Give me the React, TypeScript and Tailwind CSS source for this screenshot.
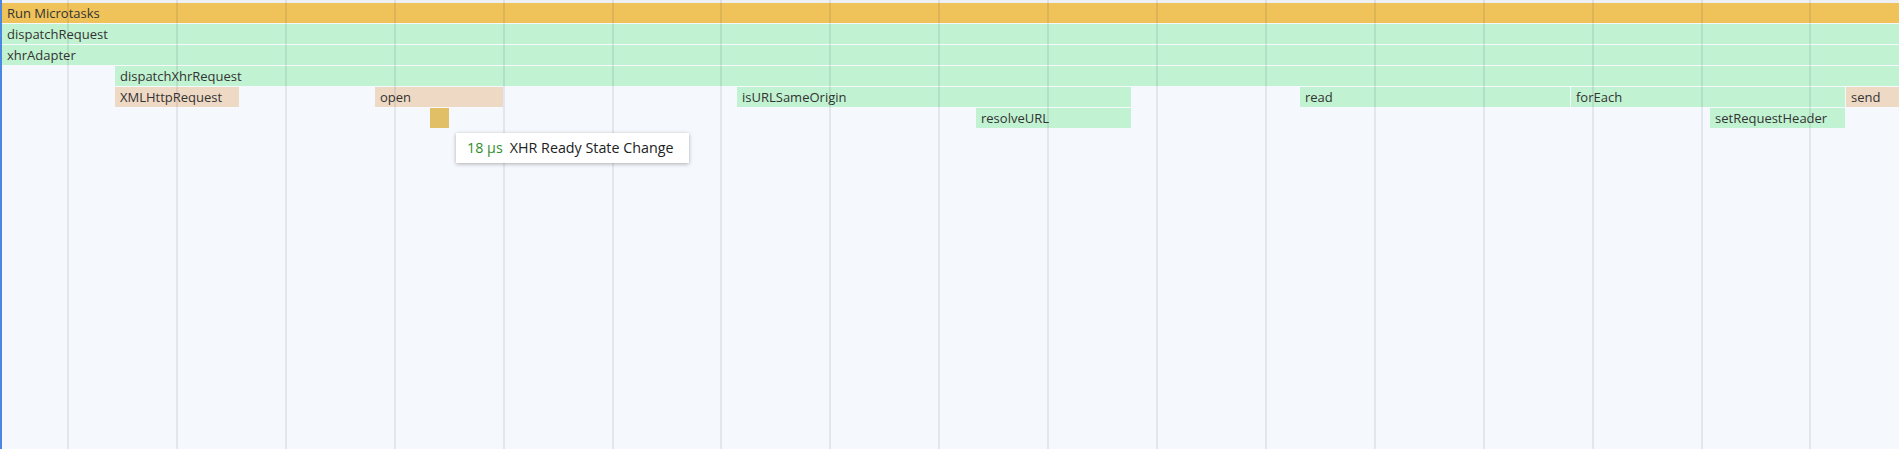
import React from "react";

type Bar = { x1: number; x2: number; label?: string; color: "o" | "g" | "t" | "y" };

const rows: Bar[][] = [
  [{ x1: 2, x2: 1899, label: "Run Microtasks", color: "o" }],
  [{ x1: 2, x2: 1899, label: "dispatchRequest", color: "g" }],
  [{ x1: 2, x2: 1899, label: "xhrAdapter", color: "g" }],
  [{ x1: 115, x2: 1899, label: "dispatchXhrRequest", color: "g" }],
  [
    { x1: 115, x2: 239, label: "XMLHttpRequest", color: "t" },
    { x1: 375, x2: 503, label: "open", color: "t" },
    { x1: 737, x2: 1131, label: "isURLSameOrigin", color: "g" },
    { x1: 1300, x2: 1570, label: "read", color: "g" },
    { x1: 1571, x2: 1845, label: "forEach", color: "g" },
    { x1: 1846, x2: 1899, label: "send", color: "t" },
  ],
  [
    { x1: 430, x2: 449, color: "y" },
    { x1: 976, x2: 1131, label: "resolveURL", color: "g" },
    { x1: 1710, x2: 1845, label: "setRequestHeader", color: "g" },
  ],
];

const colorClass: Record<Bar["color"], string> = {
  o: "bg-[#efc35a]",
  g: "bg-[#c1f2d1]",
  t: "bg-[#eed9c5]",
  y: "bg-[#e0bf66]",
};

const gridLines = Array.from({ length: 17 }, (_, k) => 68 + 108.9 * k);

export default function App() {
  return (
    <div
      className="relative w-[1899px] h-[449px] overflow-hidden bg-[#f5f8fd] border-l-2 border-[#4a88e2] text-[#333333]"
      style={{ fontFamily: '"Open Sans", "Noto Sans", sans-serif' }}
    >
      <div className="h-[3px] bg-[#eef0f3]" />
      <div className="flex flex-col gap-px">
        {rows.map((row, i) => (
          <div key={i} className="relative h-[20px]">
            {row.map((b, j) => (
              <div
                key={j}
                className={`absolute top-0 h-[20px] overflow-hidden whitespace-nowrap pl-[5px] text-[13px] leading-[21px] ${colorClass[b.color]}`}
                style={{ left: b.x1 - 2, width: b.x2 - b.x1 }}
              >
                {b.label}
              </div>
            ))}
          </div>
        ))}
      </div>
      {gridLines.map((x, i) => (
        <div
          key={i}
          className="pointer-events-none absolute top-0 bottom-0 w-[2px] bg-[rgba(0,0,40,0.07)]"
          style={{ left: Math.round(x) - 3 }}
        />
      ))}
      <div className="absolute left-[454px] top-[133px] flex h-[30px] w-[233px] items-center gap-[7px] bg-white pl-[11px] text-[14.3px] text-[#222222] shadow-[0_1px_4px_rgba(0,0,0,0.3)]">
        <span className="text-[#2f8f2f]">18 µs</span>
        <span>XHR Ready State Change</span>
      </div>
    </div>
  );
}
